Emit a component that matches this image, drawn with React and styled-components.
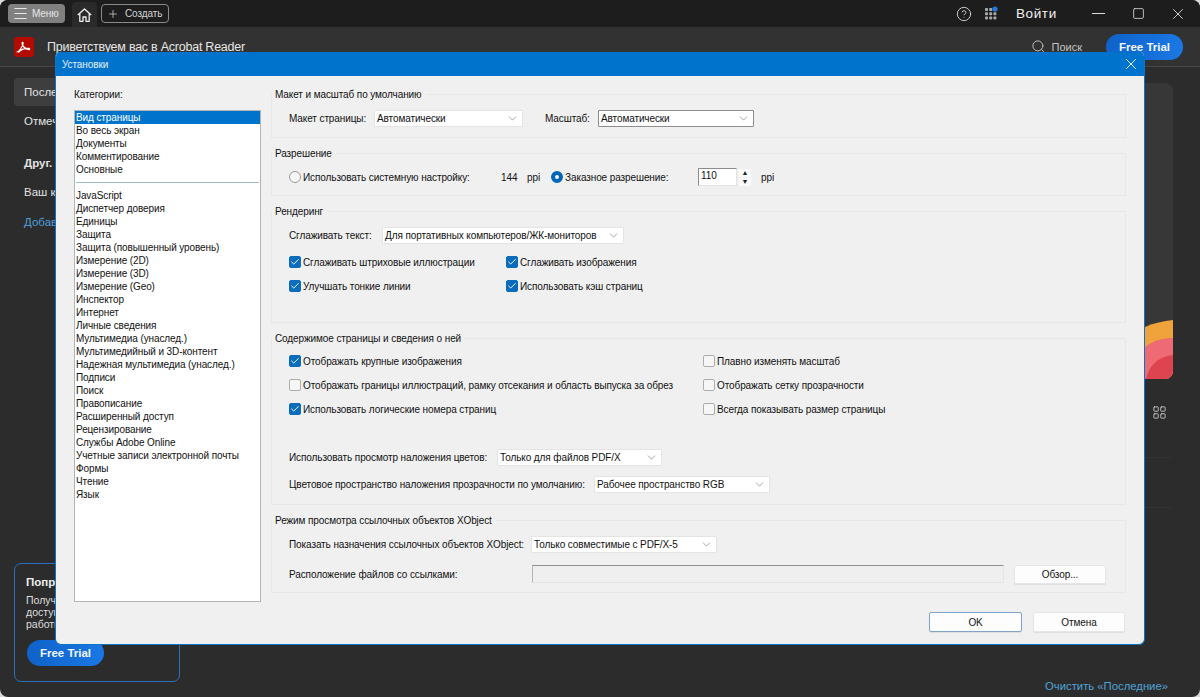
import styled, { createGlobalStyle } from "styled-components"
import { ChevronDown, Check, Plus, Menu, X, Search, Minus, Square, CircleHelp, LayoutGrid } from "lucide-react"

const Global = createGlobalStyle`
  html, body {
    margin: 0;
    padding: 0;
    background: #d9d9d9;
  }
  * {
    box-sizing: border-box;
  }
  body {
    font-family: "Liberation Sans", Arial, sans-serif;
    overflow: hidden;
  }
`

const Win = styled.div`
  position: relative;
  width: 1200px;
  height: 697px;
  display: flex;
  flex-direction: column;
  background: #2c2c2c;
  border-radius: 8px;
  overflow: hidden;
  color: #e3e3e3;
`

const TitleBar = styled.div`
  height: 27px;
  flex: none;
  display: flex;
  align-items: center;
  background: #1d1d1d;
  padding-left: 8px;
`

const MenuBtn = styled.div`
  width: 57px;
  height: 19px;
  display: flex;
  align-items: center;
  gap: 3px;
  padding-left: 4px;
  background: #808080;
  border-radius: 4px;
  font-size: 10px;
  letter-spacing: -0.1px;
  color: #e8e8e8;
`

const HomeTab = styled.div`
  width: 25px;
  height: 25px;
  margin: 2px 4px 0 7px;
  align-self: flex-start;
  display: flex;
  align-items: center;
  justify-content: center;
  background: #2a2a2a;
  border-radius: 4px 4px 0 0;
  color: #f0f0f0;
`

const CreateBtn = styled.div`
  width: 68px;
  height: 19px;
  display: flex;
  align-items: center;
  gap: 6px;
  padding-left: 5px;
  border: 1px solid #8a8a8a;
  border-radius: 4px;
  font-size: 10px;
  letter-spacing: -0.1px;
  color: #d4d4d4;
`

const TitleRight = styled.div`
  margin-left: auto;
  padding-right: 2px;
  display: flex;
  align-items: center;
  height: 100%;
  color: #e0e0e0;
`

const AppsIcon = styled.svg`
  margin-left: 12px;
  display: block;
`

const SignIn = styled.div`
  width: 62px;
  margin-left: 18px;
  font-size: 13.5px;
  letter-spacing: 0.6px;
  color: #f2f2f2;
`

const WinBtn = styled.div`
  width: 40px;
  display: flex;
  justify-content: center;
  color: #dcdcdc;
`

const Header = styled.div`
  height: 40px;
  flex: none;
  display: flex;
  align-items: center;
  padding: 0 17px 0 14px;
  background: #323232;
  border-bottom: 1px solid #474747;
`

const Logo = styled.svg`
  display: block;
  flex: none;
`

const HeaderTitle = styled.div`
  margin-left: 13px;
  font-size: 12.5px;
  letter-spacing: -0.24px;
  color: #e6e6e6;
`

const SearchBox = styled.div`
  margin-left: auto;
  display: flex;
  align-items: center;
  gap: 6px;
  font-size: 11px;
  color: #c4c4c4;
`

const TrialBtn = styled.div`
  width: 77px;
  height: 26px;
  display: flex;
  align-items: center;
  justify-content: center;
  border-radius: 13px;
  background: linear-gradient(90deg, #0f62c9, #1a78e4);
  color: #f2f6fc;
  font-size: 11.5px;
  font-weight: 700;
`

const HeaderTrial = styled(TrialBtn)`
  margin-left: 24px;
`

const Main = styled.div`
  flex: 1;
  display: flex;
  min-height: 0;
`

const Sidebar = styled.div`
  width: 180px;
  flex: none;
  margin-left: 14px;
  padding: 11px 0 15px;
  display: flex;
  flex-direction: column;
`

const NavItem = styled.div`
  height: 28px;
  margin-bottom: 1px;
  display: flex;
  align-items: center;
  padding-left: 10px;
  border-radius: 4px;
  font-size: 11.5px;
  white-space: nowrap;
  background: ${props => (props.active ? "#3e3e3e" : "transparent")};
`

const SideHead = styled.div`
  margin: 13px 0 0 10px;
  height: 28px;
  display: flex;
  align-items: center;
  font-size: 11.5px;
  font-weight: 700;
`

const SideLine = styled.div`
  height: 30px;
  padding-left: 10px;
  display: flex;
  align-items: center;
  font-size: 11.5px;
  white-space: nowrap;
  color: ${props => (props.link ? "#4f9fd8" : "#e3e3e3")};
`

const PromoCard = styled.div`
  margin-top: auto;
  width: 166px;
  height: 119px;
  padding: 12px 11px 0;
  border: 1px solid #2a6fc0;
  border-radius: 7px;
`

const PromoTitle = styled.div`
  font-size: 11.5px;
  font-weight: 700;
  color: #ececec;
`

const PromoText = styled.div`
  margin-top: 6px;
  font-size: 10.5px;
  line-height: 12px;
  color: #dedede;
`

const PromoTrial = styled(TrialBtn)`
  margin-top: 10px;
  margin-left: 1px;
`

const Content = styled.div`
  flex: 1;
  display: flex;
  flex-direction: column;
  padding: 16px 27px 5px 0;
`

const ArtPanel = styled.div`
  height: 296px;
  flex: none;
  display: flex;
  align-items: flex-end;
  justify-content: flex-end;
  background: #373737;
  border-radius: 8px;
  overflow: hidden;
`

const ViewRow = styled.div`
  height: 79px;
  flex: none;
  padding: 26px 6px 0 0;
  display: flex;
  justify-content: flex-end;
  border-bottom: 1px solid #323232;
  color: #cfcfcf;
`

const EmptyRow = styled.div`
  height: 50px;
  flex: none;
  border-bottom: 1px solid #323232;
`

const ClearLink = styled.div`
  margin-top: auto;
  margin-right: 5px;
  text-align: right;
  font-size: 11.3px;
  color: #4fa3d9;
`

/* settings dialog */

const Dialog = styled.div`
  position: absolute;
  left: 55px;
  top: 52px;
  width: 1090px;
  height: 593px;
  display: flex;
  flex-direction: column;
  background: #f0f0f0;
  border: 1px solid #0a74c8;
  border-top: 0;
  border-radius: 5px 5px 6px 6px;
  overflow: hidden;
  color: #111;
  font-size: 10px;
  letter-spacing: -0.1px;
`

const DialogTitle = styled.div`
  height: 24px;
  flex: none;
  display: flex;
  align-items: center;
  justify-content: space-between;
  padding: 0 4px 0 6px;
  background: #0074cc;
  color: #e6f1fa;
`

const DialogBody = styled.div`
  flex: 1;
  display: grid;
  grid-template-columns: 187px 855px;
  column-gap: 10px;
  padding: 12px 18px 0;
`

const CategoryCol = styled.div`
  display: flex;
  flex-direction: column;
`

const CategoryLabel = styled.div`
  height: 13px;
  line-height: 13px;
  margin-bottom: 9px;
`

const ListBox = styled.ul`
  list-style: none;
  margin: 0;
  padding: 0;
  height: 492px;
  background: #fff;
  border: 1px solid #b4b4b4;
`

const ListItem = styled.li`
  height: 13px;
  line-height: 13px;
  padding-left: 1px;
  background: ${props => (props.selected ? "#0074cc" : "transparent")};
  color: ${props => (props.selected ? "#fff" : "#111")};
`

const ListDivider = styled.li`
  height: 13px;
  margin: 0 1px;
  display: flex;
  align-items: center;

  &::before {
    content: "";
    flex: 1;
    height: 1px;
    background: #9db9cc;
  }
`

const Groups = styled.div`
  display: flex;
  flex-direction: column;
  gap: 9px;
`

const Group = styled.fieldset`
  margin: 0;
  min-width: 0;
  height: ${props => props.h}px;
  padding: ${props => props.pt}px 17px 0;
  border: 1px solid #e7e7e7;
`

const Legend = styled.legend`
  height: 13px;
  line-height: 13px;
  margin-left: -17px;
  padding: 0 4px 0 3px;
`

const Row = styled.div`
  height: ${props => props.h || 17}px;
  margin-top: ${props => props.mt || 0}px;
  display: flex;
  align-items: center;
  white-space: nowrap;
`

const Label = styled.span`
  width: ${props => (props.w ? `${props.w}px` : "auto")};
  margin-left: ${props => props.ml || 0}px;
  flex: none;
`

const SelectBox = styled.div`
  width: ${props => props.w}px;
  height: 17px;
  flex: none;
  display: flex;
  align-items: center;
  justify-content: space-between;
  padding: 0 3px 0 2px;
  background: #fff;
  border: 1px solid ${props => (props.focused ? "#8d8d8d" : "#e4e4e4")};
  border-radius: 1px;
  color: #5a5a5a;

  span {
    color: #111;
  }
`

const CheckGrid = styled.div`
  display: grid;
  grid-template-columns: ${props => props.col}px 1fr;
  row-gap: 6px;
  margin-top: ${props => props.mt || 0}px;
`

const CheckRow = styled.div`
  height: 18px;
  display: flex;
  align-items: center;
  gap: 2px;
  white-space: nowrap;
`

const CheckMark = styled.span`
  width: 12px;
  height: 12px;
  flex: none;
  display: flex;
  align-items: center;
  justify-content: center;
  border-radius: 2px;
  background: ${props => (props.on ? "#0a6cbd" : "#f6f6f6")};
  border: 1px solid ${props => (props.on ? "#0a6cbd" : "#adadad")};
  color: #fff;
`

const Radio = styled.span`
  width: 12px;
  height: 12px;
  flex: none;
  border-radius: 50%;
  background: #f6f6f6;
  border: ${props => (props.on ? "4px solid #0067b8" : "1px solid #9a9a9a")};
`

const NumInput = styled.div`
  width: 39px;
  height: 18px;
  margin-left: 6px;
  padding: 1px 0 0 2px;
  background: #fff;
  border: 1px solid #e2e2e2;
  border-top-color: #8c8c8c;
  border-left-color: #8c8c8c;
`

const Spin = styled.div`
  width: 12px;
  height: 18px;
  margin-left: 2px;
  display: flex;
  flex-direction: column;
  gap: 1px;
  justify-content: center;
`

const SpinPart = styled.div`
  height: 8px;
  display: flex;
  align-items: center;
  justify-content: center;
  background: #fbfbfb;
  font-size: 7px;
  line-height: 8px;
  color: #222;
`

const PathInput = styled.div`
  width: 472px;
  height: 18px;
  flex: none;
  background: #efefef;
  border: 1px solid #e6e6e6;
  border-top: 1px solid #8f8f8f;
  border-left: 1px solid #b5b5b5;
`

const Button = styled.div`
  width: ${props => props.w}px;
  height: ${props => props.h}px;
  flex: none;
  display: flex;
  align-items: center;
  justify-content: center;
  background: #fdfdfd;
  border: 1px solid ${props => (props.primary ? "#7fa3cc" : "#e6e6e6")};
  border-radius: 2px;
  box-shadow: 0 1px 1px rgba(0, 0, 0, 0.08);
`

const BrowseBtn = styled(Button)`
  margin-left: 10px;
`

const Footer = styled.div`
  height: 52px;
  flex: none;
  display: flex;
  justify-content: flex-end;
  gap: 11px;
  padding: 10px 19px 0 0;
`

const topCategories = ["Вид страницы", "Во весь экран", "Документы", "Комментирование", "Основные"]

const otherCategories = [
  "JavaScript",
  "Диспетчер доверия",
  "Единицы",
  "Защита",
  "Защита (повышенный уровень)",
  "Измерение (2D)",
  "Измерение (3D)",
  "Измерение (Geo)",
  "Инспектор",
  "Интернет",
  "Личные сведения",
  "Мультимедиа (унаслед.)",
  "Мультимедийный и 3D-контент",
  "Надежная мультимедиа (унаслед.)",
  "Подписи",
  "Поиск",
  "Правописание",
  "Расширенный доступ",
  "Рецензирование",
  "Службы Adobe Online",
  "Учетные записи электронной почты",
  "Формы",
  "Чтение",
  "Язык",
]

function Select({ w, focused, children }) {
  return (
    <SelectBox w={w} focused={focused}>
      <span>{children}</span>
      <ChevronDown size={13} strokeWidth={1} />
    </SelectBox>
  )
}

function CheckItem({ on, children }) {
  return (
    <CheckRow>
      <CheckMark on={on}>{on && <Check size={10} strokeWidth={2.2} />}</CheckMark>
      {children}
    </CheckRow>
  )
}

function HomeGlyph() {
  return (
    <svg width="15" height="14" viewBox="0 0 15 14" fill="none" stroke="currentColor" strokeWidth="1.3" strokeLinejoin="round">
      <path d="M.8 7 7.500 1l6.700 6" />
      <path d="M2.800 5.600v7.700h3.200V9h3v4.300h3.200V5.600" />
    </svg>
  )
}

function AcrobatLogo() {
  return (
    <Logo width="20" height="20" viewBox="0 0 20 20">
      <rect width="20" height="20" rx="3" fill="#b30b00" />
      <path
        d="M4.2 14.6c1.6-.9 4.2-5.2 4.9-8.3.2-1-.9-1.300-1-.3-.2 2.400 2.600 6.200 6.800 6.500 1 .1 1-.9 0-1-3-.2-7.600 1.100-9.700 3.100-.7.700-1 .4 0 0z"
        fill="none"
        stroke="#fff"
        strokeWidth="1.3"
      />
    </Logo>
  )
}

function AppsGlyph() {
  const dots = []
  for (let r = 0; r < 3; r++) {
    for (let c = 0; c < 3; c++) {
      if (r === 0 && c === 2) continue
      dots.push(<rect key={`${r}-${c}`} x={1 + c * 4.2} y={2 + r * 4.2} width="3" height="3" rx="0.8" fill="#a8a8a8" />)
    }
  }
  return (
    <AppsIcon width="14" height="16" viewBox="0 0 14 16">
      {dots}
      <circle cx="11" cy="3" r="2.600" fill="#1f7ae0" />
    </AppsIcon>
  )
}

function ArtCorner() {
  return (
    <svg width="28" height="59" viewBox="0 0 28 59">
      <path d="M0 7C9 3 18 1 28 0V59H0z" fill="#f0a33b" />
      <path d="M0 27C9 20 18 18 28 18V59H0z" fill="#ee6a75" />
      <path d="M1 59C4 46 12 37 28 35V59z" fill="#dd4450" />
    </svg>
  )
}

export default function App() {
  return (
    <>
      <Global />
      <Win>
        <TitleBar>
          <MenuBtn>
            <Menu size={17} strokeWidth={1.5} />
            Меню
          </MenuBtn>
          <HomeTab>
            <HomeGlyph />
          </HomeTab>
          <CreateBtn>
            <Plus size={12} strokeWidth={1.5} />
            Создать
          </CreateBtn>
          <TitleRight>
            <CircleHelp size={16} strokeWidth={1.3} />
            <AppsGlyph />
            <SignIn>Войти</SignIn>
            <WinBtn>
              <Minus size={21} strokeWidth={1.2} />
            </WinBtn>
            <WinBtn>
              <Square size={13} strokeWidth={1.5} />
            </WinBtn>
            <WinBtn>
              <X size={18} strokeWidth={1.2} />
            </WinBtn>
          </TitleRight>
        </TitleBar>
        <Header>
          <AcrobatLogo />
          <HeaderTitle>Приветствуем вас в Acrobat Reader</HeaderTitle>
          <SearchBox>
            <Search size={15} strokeWidth={1.5} />
            Поиск
          </SearchBox>
          <HeaderTrial>Free Trial</HeaderTrial>
        </Header>
        <Main>
          <Sidebar>
            <NavItem active>Последние</NavItem>
            <NavItem>Отмеченные</NavItem>
            <SideHead>Друг. хранилища</SideHead>
            <SideLine>Ваш компьютер</SideLine>
            <SideLine link>Добавить файл</SideLine>
            <PromoCard>
              <PromoTitle>Попробуйте</PromoTitle>
              <PromoText>
                Получите
                <br />
                доступ
                <br />
                работы
              </PromoText>
              <PromoTrial>Free Trial</PromoTrial>
            </PromoCard>
          </Sidebar>
          <Content>
            <ArtPanel>
              <ArtCorner />
            </ArtPanel>
            <ViewRow>
              <LayoutGrid size={15} strokeWidth={1.4} />
            </ViewRow>
            <EmptyRow />
            <ClearLink>Очистить «Последние»</ClearLink>
          </Content>
        </Main>

        <Dialog>
          <DialogTitle>
            Установки
            <X size={18} strokeWidth={1.2} color="#fff" />
          </DialogTitle>
          <DialogBody>
            <CategoryCol>
              <CategoryLabel>Категории:</CategoryLabel>
              <ListBox>
                {topCategories.map((name, i) => (
                  <ListItem key={name} selected={i === 0}>
                    {name}
                  </ListItem>
                ))}
                <ListDivider />
                {otherCategories.map(name => (
                  <ListItem key={name}>{name}</ListItem>
                ))}
              </ListBox>
            </CategoryCol>
            <Groups>
              <Group h={50} pt={9}>
                <Legend>Макет и масштаб по умолчанию</Legend>
                <Row>
                  <Label w={85}>Макет страницы:</Label>
                  <Select w={149}>Автоматически</Select>
                  <Label w={53} ml={22}>
                    Масштаб:
                  </Label>
                  <Select w={156} focused>
                    Автоматически
                  </Select>
                </Row>
              </Group>
              <Group h={49} pt={8}>
                <Legend>Разрешение</Legend>
                <Row h={18}>
                  <CheckRow>
                    <Radio />
                    <Label w={198}>Использовать системную настройку:</Label>
                  </CheckRow>
                  <Label w={26}>144</Label>
                  <Label w={24}>ppi</Label>
                  <CheckRow>
                    <Radio on />
                    <Label w={127}>Заказное разрешение:</Label>
                  </CheckRow>
                  <NumInput>110</NumInput>
                  <Spin>
                    <SpinPart>▲</SpinPart>
                    <SpinPart>▼</SpinPart>
                  </Spin>
                  <Label ml={10}>ppi</Label>
                </Row>
              </Group>
              <Group h={118} pt={9}>
                <Legend>Рендеринг</Legend>
                <Row>
                  <Label w={93}>Сглаживать текст:</Label>
                  <Select w={242}>Для портативных компьютеров/ЖК-мониторов</Select>
                </Row>
                <CheckGrid col={217} mt={9}>
                  <CheckItem on>Сглаживать штриховые иллюстрации</CheckItem>
                  <CheckItem on>Сглаживать изображения</CheckItem>
                  <CheckItem on>Улучшать тонкие линии</CheckItem>
                  <CheckItem on>Использовать кэш страниц</CheckItem>
                </CheckGrid>
              </Group>
              <Group h={173} pt={7}>
                <Legend>Содержимое страницы и сведения о ней</Legend>
                <CheckGrid col={414}>
                  <CheckItem on>Отображать крупные изображения</CheckItem>
                  <CheckItem>Плавно изменять масштаб</CheckItem>
                  <CheckItem>Отображать границы иллюстраций, рамку отсекания и область выпуска за обрез</CheckItem>
                  <CheckItem>Отображать сетку прозрачности</CheckItem>
                  <CheckItem on>Использовать логические номера страниц</CheckItem>
                  <CheckItem>Всегда показывать размер страницы</CheckItem>
                </CheckGrid>
                <Row mt={31}>
                  <Label w={208}>Использовать просмотр наложения цветов:</Label>
                  <Select w={165}>Только для файлов PDF/X</Select>
                </Row>
                <Row mt={10}>
                  <Label w={305}>Цветовое пространство наложения прозрачности по умолчанию:</Label>
                  <Select w={176}>Рабочее пространство RGB</Select>
                </Row>
              </Group>
              <Group h={79} pt={9}>
                <Legend>Режим просмотра ссылочных объектов XObject</Legend>
                <Row>
                  <Label w={242}>Показать назначения ссылочных объектов XObject:</Label>
                  <Select w={186}>Только совместимые с PDF/X-5</Select>
                </Row>
                <Row h={18} mt={12}>
                  <Label w={243}>Расположение файлов со ссылками:</Label>
                  <PathInput />
                  <BrowseBtn w={92} h={19}>
                    Обзор...
                  </BrowseBtn>
                </Row>
              </Group>
            </Groups>
          </DialogBody>
          <Footer>
            <Button w={93} h={20} primary>
              OK
            </Button>
            <Button w={92} h={20}>
              Отмена
            </Button>
          </Footer>
        </Dialog>
      </Win>
    </>
  )
}
